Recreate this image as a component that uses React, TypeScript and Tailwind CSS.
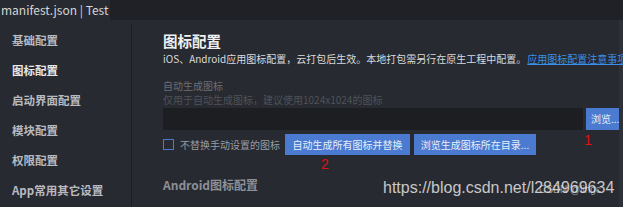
import React from "react";

const menu = ["基础配置", "图标配置", "启动界面配置", "模块配置", "权限配置", "App常用其它设置"];

const font = { fontFamily: '"Noto Sans CJK SC", "Open Sans", sans-serif' };

const App: React.FC = () => {
  return (
    <div
      className="w-[623px] h-[207px] overflow-hidden flex flex-col bg-[#272a31] relative"
      style={font}
    >
      {/* tab bar */}
      <div className="h-[20px] flex bg-[#1f2126] shrink-0">
        <div className="w-[110px] bg-[#272a31] text-[12px] leading-[20px] text-[#d6d6d6] pl-[1px]">
          manifest.json | Test
        </div>
      </div>

      <div className="flex flex-1 min-h-0">
        {/* sidebar */}
        <div className="w-[132px] shrink-0 flex flex-col pt-[1px] border-r border-[#1b1d21] mt-[4px]">
          {menu.map((m, i) => (
            <div
              key={m}
              className={`h-[30px] leading-[30px] pl-[12px] text-[11.5px] font-bold ${
                i === 1 ? "text-[#e8e8e8]" : "text-[#b8bac0]"
              }`}
            >
              {m}
            </div>
          ))}
        </div>

        {/* main */}
        <div className="flex-1 flex flex-col pl-[31px] pt-[11px] border-r-[4px] border-[#2e3138] min-w-0">
          <div className="text-[14.5px] leading-[20px] font-bold text-[#f0f0f0] whitespace-nowrap">图标配置</div>
          <div className="text-[10px] leading-[16px] text-[#dadada] whitespace-nowrap">
            iOS、Android应用图标配置，云打包后生效。本地打包需另行在原生工程中配置。
            <span className="ml-[1px] text-[#3b8fe8] underline">应用图标配置注意事项</span>
          </div>
          <div className="mt-[12px] text-[10px] leading-[14px] text-[#6c6f75] whitespace-nowrap">自动生成图标</div>
          <div className="text-[10px] leading-[14px] text-[#4f5258] whitespace-nowrap">
            仅用于自动生成图标，建议使用1024x1024的图标
          </div>
          <div className="flex gap-[3px] mt-[1px] h-[22px]">
            <div className="w-[420px] bg-[#1c1e22]" />
            <div className="w-[33px] bg-[#4a7bd0] text-[10px] leading-[22px] text-[#e8eefa] pl-[5px] whitespace-nowrap overflow-hidden">
              浏览...
            </div>
          </div>
          <div className="flex items-center mt-[4px] h-[21px]">
            <div className="w-[11px] h-[11px] border border-[#4a7bd0]" />
            <div className="ml-[6px] text-[10px] text-[#9a9ca1] whitespace-nowrap">不替换手动设置的图标</div>
            <div className="ml-[5px] w-[125px] h-[21px] bg-[#4a7bd0] text-[10px] leading-[21px] text-[#e8eefa] text-center whitespace-nowrap">
              自动生成所有图标并替换
            </div>
            <div className="ml-[4px] w-[122px] h-[21px] bg-[#4a7bd0] text-[10px] leading-[21px] text-[#e8eefa] text-center whitespace-nowrap">
              浏览生成图标所在目录...
            </div>
          </div>
          <div className="mt-[22px] text-[12px] leading-[16px] font-bold text-[#8d9096] whitespace-nowrap">Android图标配置</div>
        </div>
      </div>

      {/* annotations */}
      <div className="absolute left-[584px] top-[132px] text-[14px] leading-[16px] text-[#e01010]" style={{ fontFamily: '"Liberation Sans", sans-serif' }}>1</div>
      <div className="absolute left-[321px] top-[156px] text-[14px] leading-[16px] text-[#e01010]" style={{ fontFamily: '"Liberation Sans", sans-serif' }}>2</div>
      <div className="absolute left-[539px] top-[184px] text-[10px] leading-[12px] text-[#9a9a9a]" style={{ fontFamily: '"Liberation Sans", sans-serif' }}>CSDN @lingc</div>
      <div
        className="absolute left-[383px] top-[177px] text-[16px] leading-[22px] text-[#e6e6e6]/85"
        style={{ fontFamily: '"Liberation Sans", sans-serif' }}
      >
        https://blog.csdn.net/l284969634
      </div>
    </div>
  );
};

export default App;
